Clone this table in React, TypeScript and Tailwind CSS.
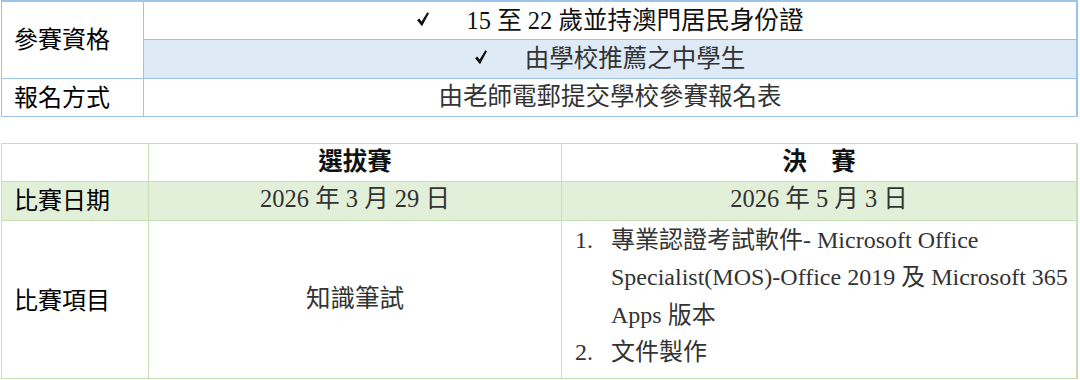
const sans = "font-['Noto_Sans_CJK_TC','Noto_Sans_CJK_SC',sans-serif]"
const serif = "font-['Liberation_Serif','Noto_Sans_CJK_TC',serif]"

function Check({ children }: { children: React.ReactNode }) {
  return (
    <span className="inline-flex items-center gap-[38px]">
      <svg width="12" height="15" viewBox="0 0 12 15" className="mb-[3px] shrink-0">
        <path d="M0 8.3 L2.3 6.5 L4.6 9.4 L10.3 0.2 L12 1.3 L5 14.3 Z" fill="#111" />
      </svg>
      <span>{children}</span>
    </span>
  )
}

export default function App() {
  return (
    <div className="h-[380px] w-[1080px] overflow-hidden bg-white pl-px">
      <table className="w-[1077px] table-fixed border-collapse border-r-2 border-t-2 border-[#9dc3e6]">
        <colgroup>
          <col className="w-[142px]" />
          <col />
        </colgroup>
        <tbody>
          <tr className="h-[38px]">
            <td
              rowSpan={2}
              className={`${sans} border border-[#9dc3e6] pb-[3px] pl-[12px] text-[24px] leading-none text-black`}
            >
              參賽資格
            </td>
            <td className={`${serif} border border-[#9dc3e6] text-center text-[24.5px] leading-none text-[#111]`}>
              <Check>15 至 22 歲並持澳門居民身份證</Check>
            </td>
          </tr>
          <tr className="h-[39px]">
            <td className={`${serif} border border-[#9dc3e6] bg-[#deeaf6] text-center text-[24.5px] leading-none text-[#333]`}>
              <Check>由學校推薦之中學生</Check>
            </td>
          </tr>
          <tr className="h-[38px]">
            <td className={`${sans} border border-[#9dc3e6] pb-[2px] pl-[12px] text-[24px] leading-none text-black`}>
              報名方式
            </td>
            <td className={`${serif} border border-[#9dc3e6] text-center text-[24.5px] leading-none text-[#333]`}>
              由老師電郵提交學校參賽報名表
            </td>
          </tr>
        </tbody>
      </table>

      <table className="mt-[26px] w-[1077px] table-fixed border-collapse border-r-2 border-[#c5e0b3]">
        <colgroup>
          <col className="w-[147px]" />
          <col className="w-[413px]" />
          <col />
        </colgroup>
        <tbody>
          <tr className="h-[38px]">
            <td className="border border-[#c5e0b3]" />
            <td className={`${serif} border border-[#c5e0b3] text-center text-[24.5px] font-bold leading-none text-[#111]`}>
              選拔賽
            </td>
            <td className={`${serif} border border-[#c5e0b3] text-center text-[24.5px] font-bold leading-none text-[#111]`}>
              決　賽
            </td>
          </tr>
          <tr className="h-[39px] bg-[#e2efd9]">
            <td className={`${sans} border border-[#c5e0b3] pb-[4px] pl-[12px] text-[24px] leading-none text-black`}>
              比賽日期
            </td>
            <td className={`${serif} border border-[#c5e0b3] pb-[2px] text-center text-[24.5px] leading-none text-[#333]`}>
              2026 年 3 月 29 日
            </td>
            <td className={`${serif} border border-[#c5e0b3] pb-[2px] text-center text-[24.5px] leading-none text-[#333]`}>
              2026 年 5 月 3 日
            </td>
          </tr>
          <tr className="h-[158px]">
            <td className={`${sans} border border-[#c5e0b3] pl-[12px] text-[24px] leading-none text-black`}>
              比賽項目
            </td>
            <td className={`${serif} border border-[#c5e0b3] text-center text-[24.5px] leading-none text-[#333]`}>
              知識筆試
            </td>
            <td className={`${serif} border border-[#c5e0b3] pb-[6px] pl-[13px] pr-[4px] pt-px align-top text-[24px] leading-[37.5px] text-[#333]`}>
              <ol>
                <li className="flex">
                  <span className="w-[36px] shrink-0">1.</span>
                  <span>專業認證考試軟件- Microsoft Office Specialist(MOS)-Office 2019 及 Microsoft 365 Apps 版本</span>
                </li>
                <li className="flex">
                  <span className="w-[36px] shrink-0">2.</span>
                  <span>文件製作</span>
                </li>
              </ol>
            </td>
          </tr>
        </tbody>
      </table>
    </div>
  )
}
